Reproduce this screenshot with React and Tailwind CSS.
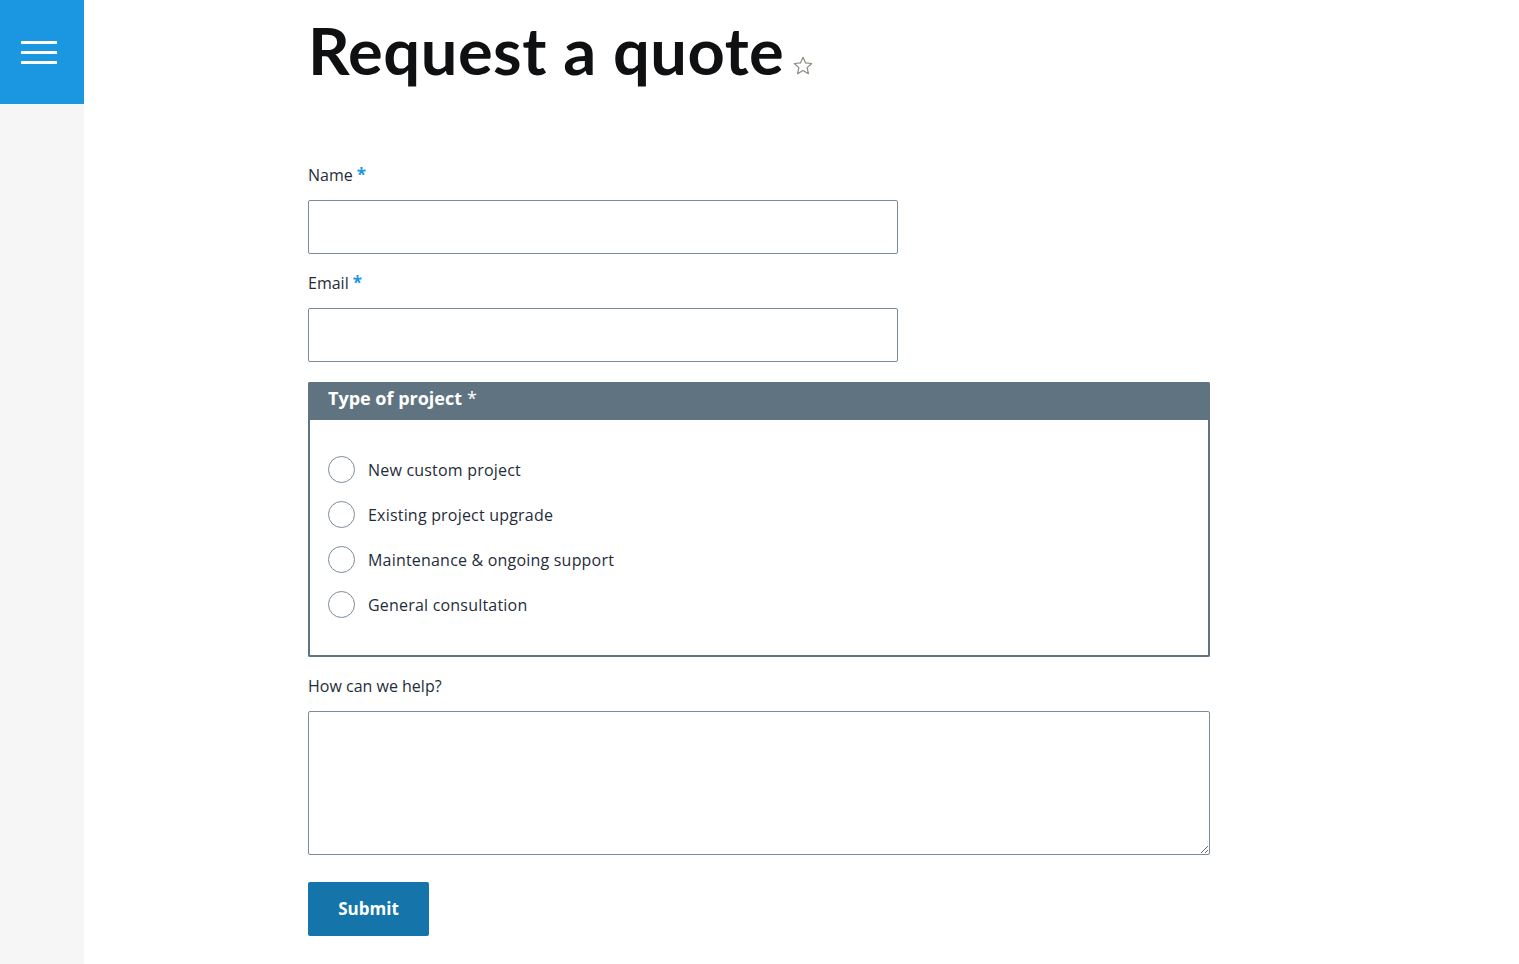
import { useState } from "react";

const projectTypes = [
  "New custom project",
  "Existing project upgrade",
  "Maintenance & ongoing support",
  "General consultation",
];

function Field({ label, required, children }) {
  return (
    <div>
      <label className="block text-[16px] text-[#1f2d3a] leading-[18px] mb-[16px]">
        {label}
        {required && <span className="text-[#1b97e2] ml-[4px] text-[17px] font-bold">*</span>}
      </label>
      {children}
    </div>
  );
}

export default function App() {
  const [form, setForm] = useState({ name: "", email: "", type: "", help: "" });
  const set = (k) => (e) => setForm((f) => ({ ...f, [k]: e.target.value }));

  return (
    <div className="flex min-h-[964px] bg-white font-['Open_Sans','Noto_Sans',sans-serif]">
      <aside className="w-[84px] shrink-0 bg-[#f5f6f5]">
        <button className="w-[84px] h-[104px] bg-[#1b97e2] flex flex-col items-center justify-center gap-[7px] pr-[6px]">
          <span className="block w-[36px] h-[3px] bg-white" />
          <span className="block w-[36px] h-[3px] bg-white" />
          <span className="block w-[36px] h-[3px] bg-white" />
        </button>
      </aside>

      <main className="pl-[224px] pt-[12px]">
        <h1 className="flex items-end text-[#0f1012] font-['Lato',sans-serif] font-bold text-[65px] leading-[76px] tracking-[0.5px]">
          Request a quote
          <svg className="ml-[8px] mb-[11px] w-[22px] h-[22px]" viewBox="0 0 24 24" fill="none" stroke="#8a8a80" strokeWidth="1.3" strokeLinejoin="round">
            <path d="M12 2.5l2.8 6.1 6.7.7-5 4.5 1.4 6.6L12 17l-5.9 3.4 1.4-6.6-5-4.5 6.7-.7z" />
          </svg>
        </h1>

        <form className="mt-[78px] w-[902px]" onSubmit={(e) => e.preventDefault()}>
          <Field label="Name" required>
            <input
              value={form.name}
              onChange={set("name")}
              className="block w-[590px] h-[54px] border border-[#7b8b98] rounded-[2px] px-3 outline-none"
            />
          </Field>

          <div className="mt-[20px]">
            <Field label="Email" required>
              <input
                type="email"
                value={form.email}
                onChange={set("email")}
                className="block w-[590px] h-[54px] border border-[#7b8b98] rounded-[2px] px-3 outline-none"
              />
            </Field>
          </div>

          <fieldset className="mt-[20px] border-2 border-t-0 border-[#5f7480] rounded-[2px] h-[275px]">
            <div className="h-[38px] -mx-[2px] bg-[#5f7480] rounded-t-[2px] px-[20px] pb-[5px] flex items-center text-white font-bold text-[18px]">
              Type of project <span className="ml-[5px] font-normal">*</span>
            </div>
            <div className="pt-[36px] pl-[18px] flex flex-col gap-[18px]">
              {projectTypes.map((t) => (
                <label key={t} className="flex items-center gap-[13px] cursor-pointer text-[16px] tracking-[0.2px] text-[#1f2d3a]">
                  <input
                    type="radio"
                    name="type"
                    value={t}
                    checked={form.type === t}
                    onChange={set("type")}
                    className="appearance-none w-[27px] h-[27px] rounded-full border border-[#7b8b98] bg-white checked:border-[8px] checked:border-[#1575ab]"
                  />
                  {t}
                </label>
              ))}
            </div>
          </fieldset>

          <div className="mt-[20px]">
            <Field label="How can we help?">
              <textarea
                value={form.help}
                onChange={set("help")}
                className="block w-[902px] h-[144px] border border-[#7b8b98] rounded-[2px] px-3 py-2 outline-none"
              />
            </Field>
          </div>

          <button
            type="submit"
            className="mt-[27px] w-[121px] h-[54px] bg-[#1575ab] text-white font-bold text-[17px] rounded-[2px]"
          >
            Submit
          </button>
        </form>
      </main>
    </div>
  );
}
